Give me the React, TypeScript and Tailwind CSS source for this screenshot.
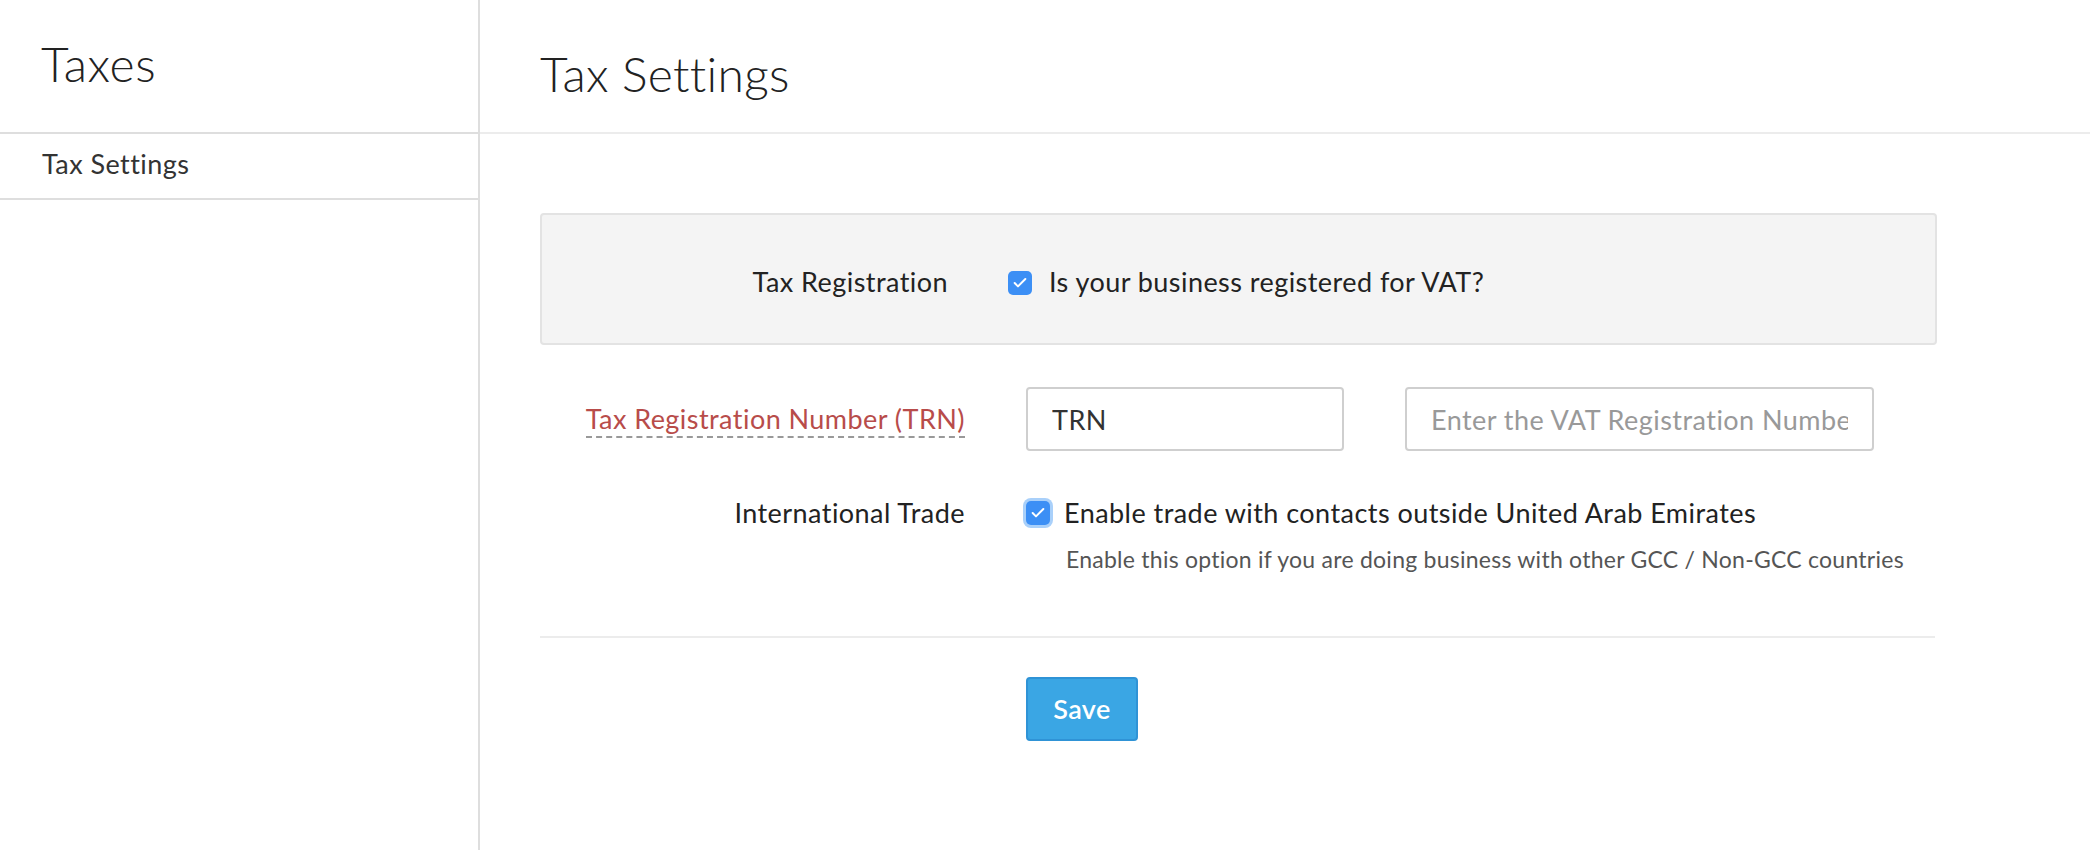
import { Check } from 'lucide-react';

function Tick({ focus }: { focus?: boolean }) {
  return (
    <span
      className={`flex h-[24px] w-[24px] shrink-0 items-center justify-center rounded-[5px] bg-[#3c8ff5] ${
        focus ? 'ring-[3px] ring-[#a9d0fa]' : ''
      }`}
    >
      <Check size={16} strokeWidth={3} className="text-white" />
    </span>
  );
}

export default function App() {
  return (
    <div className="flex h-[850px] w-full bg-white text-[#222] font-['Lato','Liberation_Sans',sans-serif] tracking-[0.45px]">
      {/* Sidebar */}
      <aside className="w-[480px] shrink-0 border-r-2 border-[#dedede]">
        <div className="h-[134px] border-b-2 border-[#dedede] px-[41px] pt-[40px]">
          <h2 className="text-[48px] font-light leading-none tracking-[0.6px]">Taxes</h2>
        </div>
        <div className="h-[66px] border-b-2 border-[#dedede] px-[42px] pt-[16px]">
          <span className="text-[27px] leading-none text-[#333]">Tax Settings</span>
        </div>
      </aside>

      {/* Main */}
      <main className="flex-1">
        <div className="h-[134px] border-b-2 border-[#ececec] pl-[60px] pt-[50px]">
          <h1 className="text-[48px] font-light leading-none tracking-[0.3px]">Tax Settings</h1>
        </div>

        <div className="pl-[60px] pt-[79px]">
          <div className="w-[1397px]">
            {/* Registration box */}
            <div className="flex h-[132px] items-center gap-[60px] rounded-[4px] border-2 border-[#e3e3e3] bg-[#f4f4f4] pt-[7px]">
              <label className="w-[406px] text-right text-[27px]">Tax Registration</label>
              <div className="flex items-center gap-[17px]">
                <Tick />
                <span className="text-[27px]">Is your business registered for VAT?</span>
              </div>
            </div>

            {/* TRN */}
            <div className="mt-[42px] flex items-center gap-[61px]">
              <div className="w-[425px] text-right">
                <span className="border-b-2 border-dashed border-[#999] pb-[1px] text-[27px] text-[#b84c4a]">
                  Tax Registration Number (TRN)
                </span>
              </div>
              <div className="flex gap-[61px]">
                <input
                  readOnly
                  value="TRN"
                  className="h-[64px] w-[318px] rounded-[4px] border-2 border-[#cfcfcf] px-[24px] text-[27px] text-[#333] outline-none"
                />
                <input
                  readOnly
                  placeholder="Enter the VAT Registration Number"
                  className="h-[64px] w-[469px] rounded-[4px] border-2 border-[#cfcfcf] px-[24px] text-[27px] outline-none placeholder:text-[#999]"
                />
              </div>
            </div>

            {/* International trade */}
            <div className="mt-[42px] flex items-start gap-[61px]">
              <label className="w-[425px] text-right text-[27px]">International Trade</label>
              <div>
                <div className="flex items-center gap-[14px]">
                  <Tick focus />
                  <span className="text-[27px]">Enable trade with contacts outside United Arab Emirates</span>
                </div>
                <p className="mt-[8px] pl-[40px] text-[23px] tracking-[0.25px] text-[#555]">
                  Enable this option if you are doing business with other GCC / Non-GCC countries
                </p>
              </div>
            </div>

            <div className="mt-[60px] h-[2px] w-[1395px] bg-[#ececec]" />

            <div className="mt-[39px] pl-[486px]">
              <button className="h-[64px] w-[112px] rounded-[4px] border-2 border-[#2f93d6] bg-[#3aa6e4] text-[27px] font-semibold text-white">
                Save
              </button>
            </div>
          </div>
        </div>
      </main>
    </div>
  );
}
